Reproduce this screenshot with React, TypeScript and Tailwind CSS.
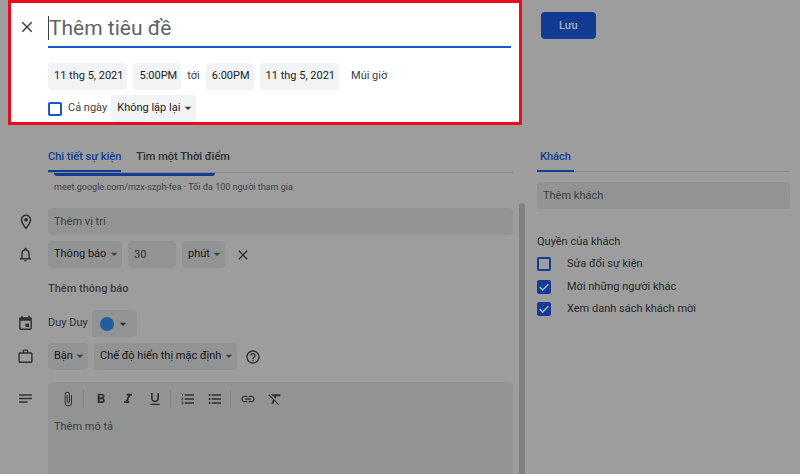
import { useState, type ReactNode } from 'react';
import {
  MdArrowDropDown,
  MdAttachFile,
  MdClose,
  MdEvent,
  MdFormatBold,
  MdFormatClear,
  MdFormatItalic,
  MdFormatListBulleted,
  MdFormatListNumbered,
  MdFormatUnderlined,
  MdHelpOutline,
  MdLink,
  MdNotes,
  MdOutlineLocationOn,
  MdNotificationsNone,
  MdWorkOutline,
} from 'react-icons/md';

function Row({ icon, children, className = '' }: { icon?: ReactNode; children: ReactNode; className?: string }) {
  return (
    <div className={`flex items-center ${className}`}>
      <div className="w-12 shrink-0 pl-[17px] text-[#2f3032]">{icon}</div>
      {children}
    </div>
  );
}

function Dropdown({ label, options, light = false }: { label: string; options: string[]; light?: boolean }) {
  return (
    <div className="relative flex">
      <select
        aria-label={label}
        className={`h-[27px] appearance-none rounded-sm pl-1.5 pr-[15px] text-[11px] ${
          light ? 'bg-[#f1f3f4] text-[#202124]' : 'bg-[#929494] text-[#151617]'
        }`}
      >
        {options.map((o) => (
          <option key={o}>{o}</option>
        ))}
      </select>
      <MdArrowDropDown size={16} className="pointer-events-none absolute right-0 top-[5px] text-[#3c4043]" />
    </div>
  );
}

function Check({ label, initial = false, light = false }: { label: string; initial?: boolean; light?: boolean }) {
  const [checked, setChecked] = useState(initial);
  return (
    <label className={`flex items-center text-[11px] ${light ? 'gap-1.5 text-[#3c4043]' : 'gap-4 text-[#26282a]'}`}>
      <span className="relative flex">
        <input
          type="checkbox"
          checked={checked}
          onChange={(e) => setChecked(e.target.checked)}
          className={`size-3.5 appearance-none rounded-xs border-2 ${
            light ? 'border-[#1a56c8]' : 'border-[#123c94] checked:bg-[#123c94]'
          }`}
        />
        {checked && (
          <svg viewBox="0 0 14 14" className="pointer-events-none absolute inset-0 size-3.5">
            <path d="M2.6 7l3 3L11.4 4.2" fill="none" stroke="#a9adb5" strokeWidth="1.6" />
          </svg>
        )}
      </span>
      {label}
    </label>
  );
}

function Chip({ children }: { children: ReactNode }) {
  return (
    <button className="h-[27px] rounded-sm bg-[#f1f3f4] pr-1 pl-1.5 text-[11px] whitespace-nowrap text-[#202124]">
      {children}
    </button>
  );
}

function Tool({ label, children }: { label: string; children: ReactNode }) {
  return (
    <button aria-label={label} className="flex w-[27px] justify-center">
      {children}
    </button>
  );
}

function Divider() {
  return <span className="mr-[3px] ml-0.5 h-[18px] w-px bg-[#858787]" />;
}

function EventHeader() {
  return (
    <header className="mr-[3px] ml-2 h-[125px] border-3 border-[#e80c1e] bg-white">
      <div className="flex pt-3">
        <button aria-label="Đóng" className="h-6 w-[37px] shrink-0 pl-[7px] text-[#3c4043]">
          <MdClose size={18} />
        </button>
        <div className="mr-2 flex h-[33px] flex-1 border-b-2 border-[#1a56c8]">
          <span className="mt-px h-6 w-px bg-[#3c4043]" />
          <input
            aria-label="Tiêu đề"
            placeholder="Thêm tiêu đề"
            className="h-[27px] min-w-0 flex-1 text-[21px] outline-none placeholder:text-[#5f6368]"
          />
        </div>
      </div>
      <div className="mt-[15px] flex items-center gap-1.5 pl-[37px]">
        <Chip>11 thg 5, 2021</Chip>
        <Chip>5:00PM</Chip>
        <span className="text-[11px] text-[#3c4043]">tới</span>
        <Chip>6:00PM</Chip>
        <Chip>11 thg 5, 2021</Chip>
        <button className="px-1.5 text-[11px] text-[#3c4043]">Múi giờ</button>
      </div>
      <div className="mt-[5px] flex items-center gap-1 pl-[37px]">
        <Check label="Cả ngày" light />
        <Dropdown label="Lặp lại" options={['Không lặp lại']} light />
      </div>
    </header>
  );
}

function Details() {
  return (
    <div className="flex flex-1">
      <div className="flex min-w-0 flex-1 flex-col">
        <div role="tablist" className="ml-12 flex gap-[15px] border-b border-[#8b8b8b] text-[11px] font-medium">
          <button role="tab" aria-selected="true" className="-mb-px h-6 border-b-2 border-[#123c94] pb-1 text-[#123c94]">
            Chi tiết sự kiện
          </button>
          <button role="tab" aria-selected="false" className="h-6 pb-1.5 text-[#2c2e30]">
            Tìm một Thời điểm
          </button>
        </div>
        <div className="ml-[54px] h-[3px] w-[161px] rounded-b-sm bg-[#123c94]" />
        <p className="mt-[3px] ml-[54px] text-[9px] leading-4 text-[#3d4043]">
          meet.google.com/mzx-szph-fea · Tối đa 100 người tham gia
        </p>

        <Row className="mt-[13px]" icon={<MdOutlineLocationOn size={18} />}>
          <input
            aria-label="Vị trí"
            placeholder="Thêm vị trí"
            className="h-[27px] min-w-0 flex-1 rounded-sm bg-[#929494] px-1.5 text-[11px] placeholder:text-[#3b3d40]"
          />
        </Row>

        <Row className="mt-1.5" icon={<MdNotificationsNone size={17} />}>
          <div className="flex items-center gap-1.5">
            <Dropdown label="Loại thông báo" options={['Thông báo', 'Email']} />
            <input
              aria-label="Thời gian"
              defaultValue="30"
              className="h-[27px] w-12 rounded-sm bg-[#929494] px-1.5 text-[11px] text-[#2c2e30]"
            />
            <Dropdown label="Đơn vị" options={['phút', 'giờ']} />
            <button aria-label="Xóa thông báo" className="ml-1 text-[#2c2e30]">
              <MdClose size={16} />
            </button>
          </div>
        </Row>

        <button className="mt-3 ml-12 h-[18px] self-start text-[11px] font-medium text-[#3b3d40]">Thêm thông báo</button>

        <Row className="mt-3" icon={<MdEvent size={17} />}>
          <div className="flex items-center gap-1 text-[11px] text-[#2c2e30]">
            Duy Duy
            <button aria-label="Màu sự kiện" className="flex h-[27px] items-center rounded-sm bg-[#929494] pr-1.5 pl-2">
              <span className="mr-px size-3.5 rounded-full bg-[#1f5f9f]" />
              <MdArrowDropDown size={16} />
            </button>
          </div>
        </Row>

        <Row className="mt-1.5" icon={<MdWorkOutline size={17} />}>
          <div className="flex items-center gap-1.5">
            <Dropdown label="Trạng thái" options={['Bận']} />
            <Dropdown label="Chế độ hiển thị" options={['Chế độ hiển thị mặc định']} />
            <button aria-label="Trợ giúp" className="ml-0.5 text-[#2c2e30]">
              <MdHelpOutline size={16} />
            </button>
          </div>
        </Row>

        <div className="mt-3 flex flex-1">
          <div className="w-12 shrink-0 pt-2 pl-[17px] text-[#2f3032]">
            <MdNotes size={17} />
          </div>
          <div className="flex min-w-0 flex-1 flex-col rounded-t-sm bg-[#929494]">
            <div className="flex h-[34px] items-center pl-1.5 text-[#2f3032]">
              <Tool label="Đính kèm tệp">
                <MdAttachFile size={16} />
              </Tool>
              <Divider />
              <Tool label="Đậm">
                <MdFormatBold size={16} />
              </Tool>
              <Tool label="Nghiêng">
                <MdFormatItalic size={16} />
              </Tool>
              <Tool label="Gạch chân">
                <MdFormatUnderlined size={16} />
              </Tool>
              <Divider />
              <Tool label="Danh sách đánh số">
                <MdFormatListNumbered size={16} />
              </Tool>
              <Tool label="Danh sách dấu đầu dòng">
                <MdFormatListBulleted size={16} />
              </Tool>
              <Divider />
              <Tool label="Chèn liên kết">
                <MdLink size={16} />
              </Tool>
              <Tool label="Xóa định dạng">
                <MdFormatClear size={16} />
              </Tool>
            </div>
            <textarea
              aria-label="Mô tả"
              placeholder="Thêm mô tả"
              className="min-h-14 flex-1 resize-none px-1.5 pt-[3px] text-[11px] outline-none placeholder:text-[#3b3d40]"
            />
          </div>
        </div>
      </div>
      <div className="mt-[55px] ml-1.5 w-1.5 rounded-t-full bg-[#808081]" />
    </div>
  );
}

function Guests() {
  return (
    <aside className="flex flex-col pt-3 pr-2.5 pl-3">
      <button className="ml-1 h-[27px] self-start rounded-sm bg-[#123c94] px-[18px] pt-0.5 text-[11px] font-medium text-[#a9b0bf]">
        Lưu
      </button>
      <div role="tablist" className="mt-[109px] flex border-b border-[#8b8b8b] text-[11px] font-medium">
        <button role="tab" aria-selected="true" className="-mb-px h-6 border-b-2 border-[#123c94] px-[3px] pb-1 text-[#123c94]">
          Khách
        </button>
      </div>
      <input
        aria-label="Thêm khách"
        placeholder="Thêm khách"
        className="mt-2.5 h-[27px] rounded-sm bg-[#929494] px-1.5 text-[11px] placeholder:text-[#3b3d40]"
      />
      <h2 className="mt-[25px] text-[11px] leading-4 text-[#26282a]">Quyền của khách</h2>
      <div className="mt-1.5 flex flex-col gap-1.5">
        <Check label="Sửa đổi sự kiện" />
        <Check label="Mời những người khác" initial />
        <Check label="Xem danh sách khách mời" initial />
      </div>
    </aside>
  );
}

export default function App() {
  return (
    <div className="grid min-h-screen grid-cols-[minmax(0,1fr)_275px] bg-[#9d9d9d] font-[Roboto,'Noto_Sans',sans-serif]">
      <main className="flex flex-col gap-[23px]">
        <EventHeader />
        <Details />
      </main>
      <Guests />
    </div>
  );
}
